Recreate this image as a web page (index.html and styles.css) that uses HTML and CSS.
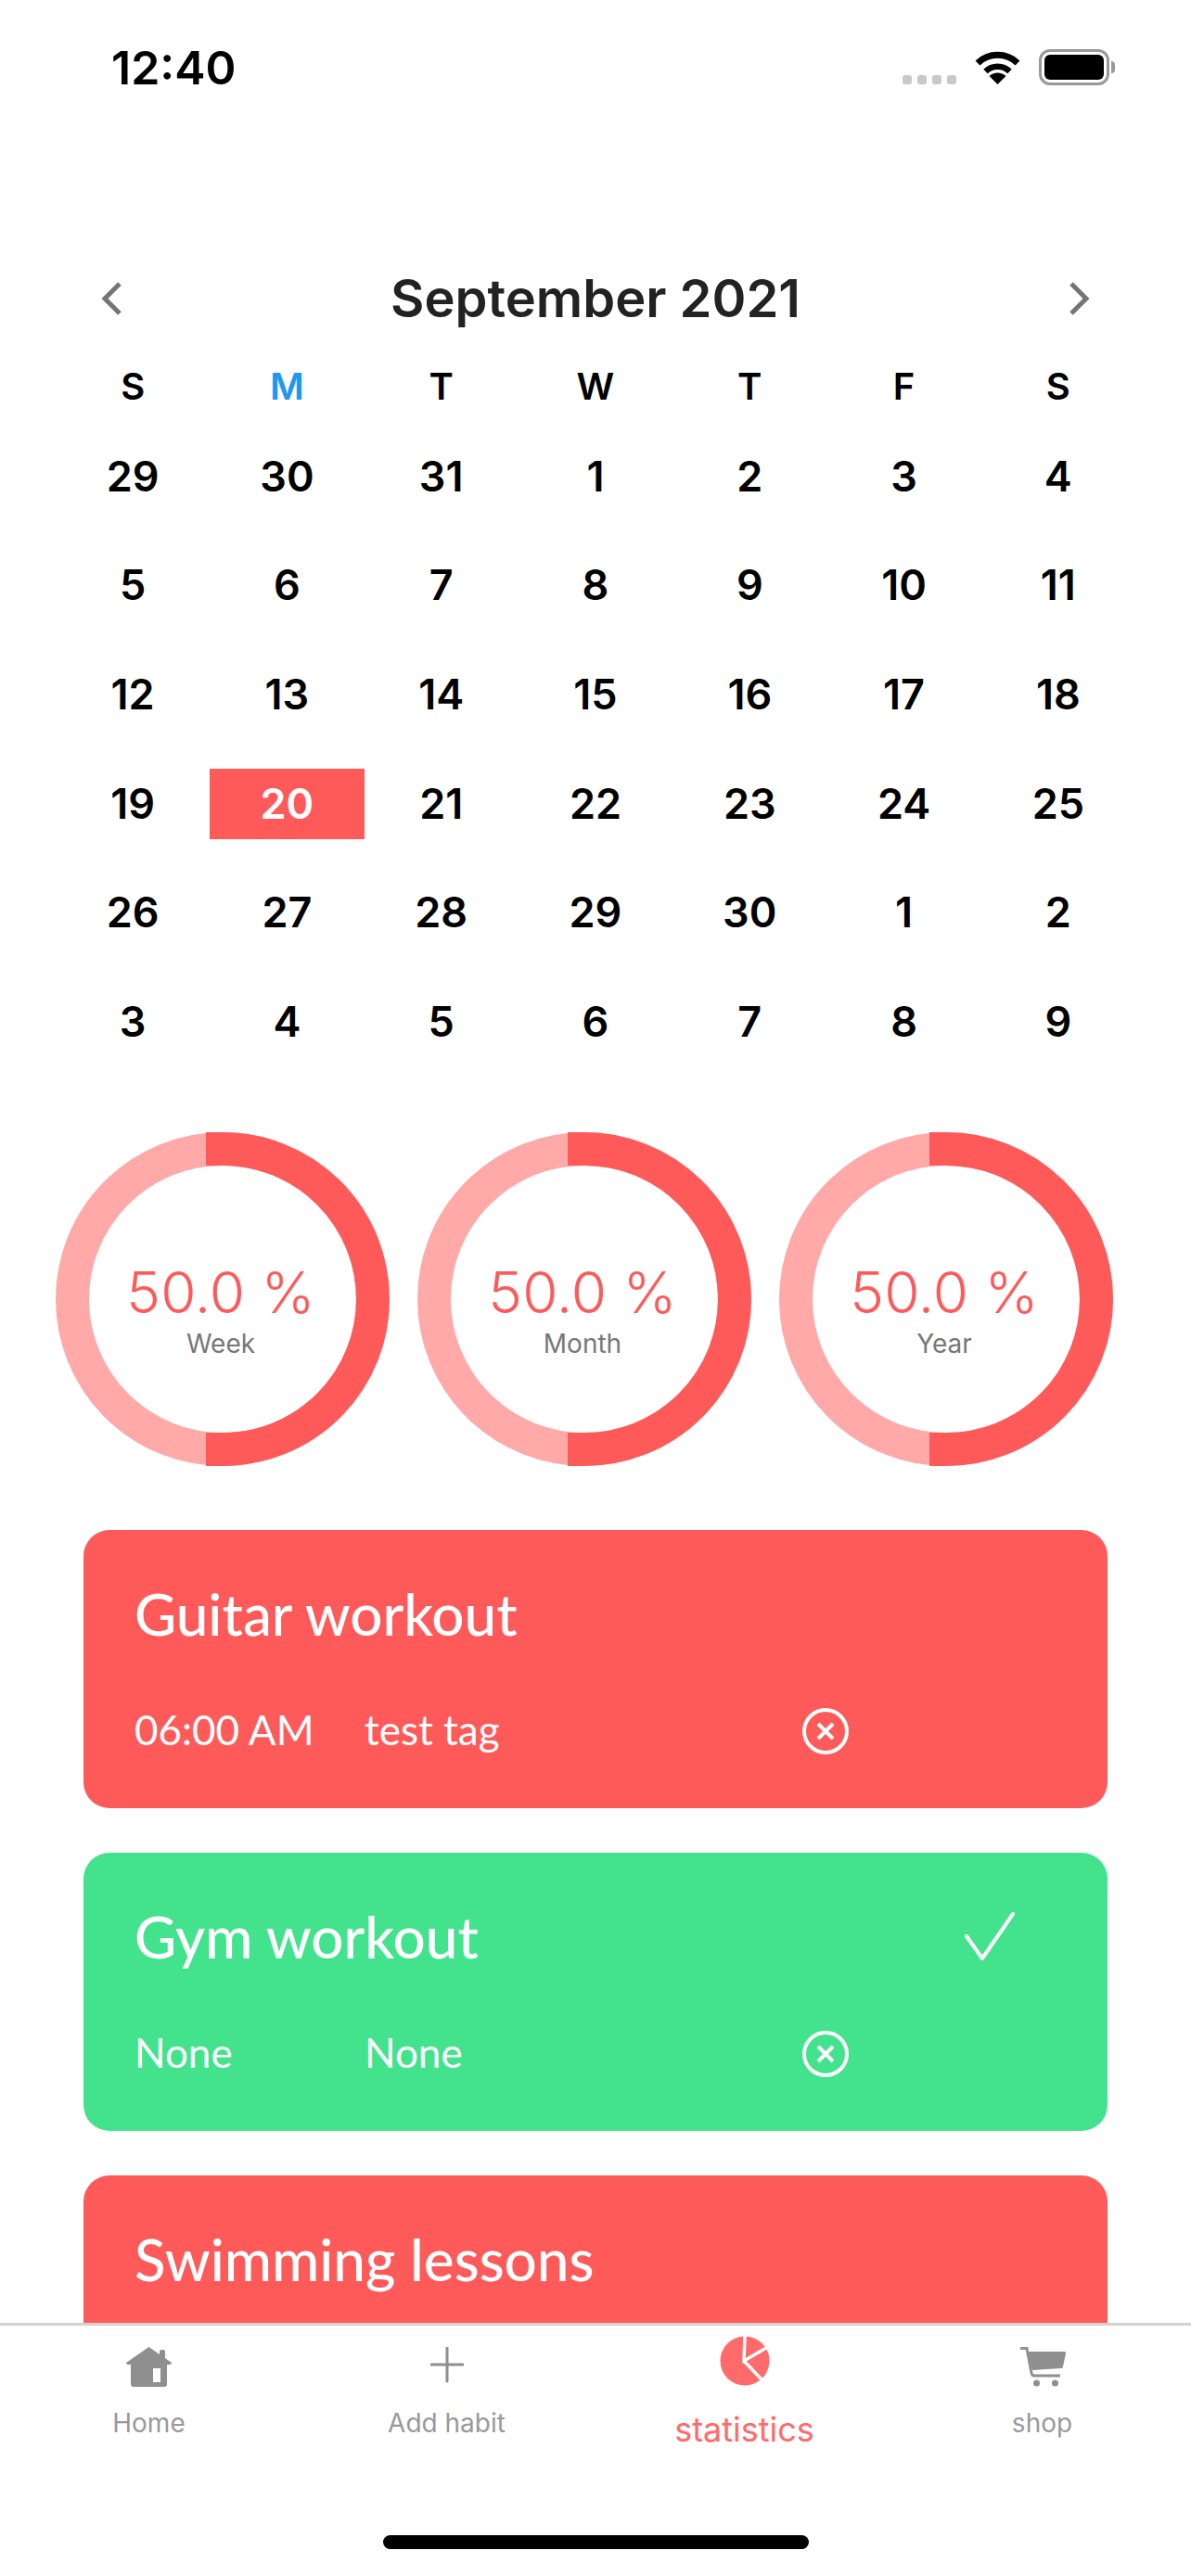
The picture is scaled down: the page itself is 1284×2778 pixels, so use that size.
FILE: index.html
```html
<!DOCTYPE html>
<html lang="en">
  <head>
    <meta charset="UTF-8" />
    <meta name="viewport" content="width=device-width, initial-scale=1.0" />
    <title>Habits</title>
    <link rel="stylesheet" href="styles.css">
  </head>
  <body>
    <div id="phone">
      <div id="statusBar">
        <span id="clock">12:40</span>
        <div id="statusIcons">
          <div id="signal"><i></i><i></i><i></i><i></i></div>
          <svg id="wifi" width="49" height="37" viewBox="0 0 49 37">
            <path d="M3 14 A31 31 0 0 1 46 14" fill="none" stroke="#000" stroke-width="7" />
            <path d="M11.500 23 A19 19 0 0 1 37.500 23" fill="none" stroke="#000" stroke-width="6.500" />
            <path d="M24.500 37 L15.500 28 A13 13 0 0 1 33.500 28 Z" />
          </svg>
          <div id="battery"><div id="batteryFill"></div></div>
          <div id="batteryNub"></div>
        </div>
      </div>

      <div id="content">
        <div id="calendar">
          <div id="calendarHead">
            <svg class="arrow" width="24" height="36" viewBox="0 0 24 36">
              <path d="M21 2 L5 18 L21 34" />
            </svg>
            <span id="monthTitle">September 2021</span>
            <svg class="arrow" width="24" height="36" viewBox="0 0 24 36">
              <path d="M3 2 L19 18 L3 34" />
            </svg>
          </div>
          <div class="weekdays">
            <span>S</span><span class="today">M</span><span>T</span><span>W</span><span>T</span><span>F</span><span>S</span>
          </div>
          <div class="days">
            <span>29</span><span>30</span><span>31</span><span>1</span><span>2</span><span>3</span><span>4</span>
            <span>5</span><span>6</span><span>7</span><span>8</span><span>9</span><span>10</span><span>11</span>
            <span>12</span><span>13</span><span>14</span><span>15</span><span>16</span><span>17</span><span>18</span>
            <span>19</span><span class="selected">20</span><span>21</span><span>22</span><span>23</span><span>24</span><span>25</span>
            <span>26</span><span>27</span><span>28</span><span>29</span><span>30</span><span>1</span><span>2</span>
            <span>3</span><span>4</span><span>5</span><span>6</span><span>7</span><span>8</span><span>9</span>
          </div>
        </div>

        <div id="rings">
          <div class="ring">
            <svg width="360" height="360" viewBox="0 0 360 360">
              <circle class="ringBack" cx="180" cy="180" r="162" />
              <circle class="ringFront" cx="180" cy="180" r="162" pathLength="100" transform="rotate(-90 180 180)" />
            </svg>
            <div class="ringText">
              <span class="ringValue">50.0 %</span>
              <span class="ringLabel">Week</span>
            </div>
          </div>
          <div class="ring">
            <svg width="360" height="360" viewBox="0 0 360 360">
              <circle class="ringBack" cx="180" cy="180" r="162" />
              <circle class="ringFront" cx="180" cy="180" r="162" pathLength="100" transform="rotate(-90 180 180)" />
            </svg>
            <div class="ringText">
              <span class="ringValue">50.0 %</span>
              <span class="ringLabel">Month</span>
            </div>
          </div>
          <div class="ring">
            <svg width="360" height="360" viewBox="0 0 360 360">
              <circle class="ringBack" cx="180" cy="180" r="162" />
              <circle class="ringFront" cx="180" cy="180" r="162" pathLength="100" transform="rotate(-90 180 180)" />
            </svg>
            <div class="ringText">
              <span class="ringValue">50.0 %</span>
              <span class="ringLabel">Year</span>
            </div>
          </div>
        </div>

        <div id="habits">
          <div class="habit red">
            <div class="habitTop">
              <span class="habitName">Guitar workout</span>
            </div>
            <div class="habitRow">
              <span>06:00 AM</span>
              <span>test tag</span>
              <svg class="cancel" width="50" height="50" viewBox="0 0 50 50">
                <circle cx="25" cy="25" r="23" />
                <path d="M17 17 L33 33 M33 17 L17 33" />
              </svg>
            </div>
          </div>
          <div class="habit green">
            <div class="habitTop">
              <span class="habitName">Gym workout</span>
              <svg class="done" width="54" height="52" viewBox="0 0 54 52">
                <path d="M2 26 L19 50 L52 2" />
              </svg>
            </div>
            <div class="habitRow">
              <span>None</span>
              <span>None</span>
              <svg class="cancel" width="50" height="50" viewBox="0 0 50 50">
                <circle cx="25" cy="25" r="23" />
                <path d="M17 17 L33 33 M33 17 L17 33" />
              </svg>
            </div>
          </div>
          <div class="habit red">
            <div class="habitTop">
              <span class="habitName">Swimming lessons</span>
            </div>
          </div>
        </div>
      </div>

      <div id="tabBar">
        <div class="tabs">
          <div class="tab">
            <svg class="tabIcon" width="49" height="43" viewBox="0 0 49 43">
              <path d="M24.500 0 L36 8 L36 5 Q36 3 38 3 L40 3 Q42 3 42 5 L42 12 L49 17 Q49 19 47 19 L44 19 L44 40 Q44 43 41 43 L8 43 Q5 43 5 40 L5 19 L2 19 Q0 19 0 17 Z M29 23 L29 38 L37 38 L37 23 Z" fill-rule="evenodd" />
            </svg>
            <span>Home</span>
          </div>
          <div class="tab">
            <svg class="tabIcon" width="36" height="43" viewBox="0 0 36 43">
              <path class="plus" d="M18 1 L18 37 M0 19 L36 19" />
            </svg>
            <span>Add habit</span>
          </div>
          <div class="tab active">
            <svg class="tabIcon" width="54" height="54" viewBox="0 0 54 54">
              <circle cx="27" cy="27" r="26.500" />
              <path class="pieCut" d="M27 0 L26 27 L50 13 M26 27 L46 48" />
            </svg>
            <span>statistics</span>
          </div>
          <div class="tab">
            <svg class="tabIcon" width="50" height="43" viewBox="0 0 50 43">
              <path d="M9 5 L49 5 Q50 5 50 7 L47 21 Q47 23 45 23 L14 25 Z" />
              <path class="cartLine" d="M1 1.500 L8 1.500 L13 28 Q13.500 31 16 31 L44 31" />
              <circle cx="18.500" cy="39" r="3.500" />
              <circle cx="38.500" cy="39" r="3.500" />
            </svg>
            <span>shop</span>
          </div>
        </div>
        <div id="homeBar"></div>
      </div>
    </div>
  </body>
</html>
```
FILE: styles.css
```css
body {
  margin: 0;
  padding: 0;
  background-color: white;
  font-family: Inter, "Liberation Sans", sans-serif;
}
#phone {
  width: 1284px;
  height: 2778px;
  display: flex;
  flex-direction: column;
  overflow: hidden;
}

/* status bar */
#statusBar {
  height: 120px;
  flex-shrink: 0;
  padding: 0 82px 0 120px;
  box-sizing: border-box;
  display: flex;
  justify-content: space-between;
  align-items: flex-start;
}
#clock {
  margin-top: 44px;
  font-size: 50px;
  line-height: 58px;
  font-weight: 600;
  color: black;
}
#statusIcons {
  margin-top: 53px;
  display: flex;
  align-items: flex-start;
}
#signal {
  margin-top: 28px;
  margin-right: 20px;
  display: flex;
  gap: 6px;
}
#signal i {
  width: 10px;
  height: 10px;
  border-radius: 3px;
  background-color: #c9c9c9;
}
#wifi {
  margin-top: 1px;
  margin-right: 20px;
}
#battery {
  width: 76px;
  height: 39px;
  padding: 3px;
  box-sizing: border-box;
  border: 3px solid #999;
  border-radius: 12px;
}
#batteryFill {
  height: 100%;
  border-radius: 6px;
  background-color: black;
}
#batteryNub {
  width: 4px;
  height: 13px;
  margin-top: 13px;
  margin-left: 2px;
  border-radius: 0 4px 4px 0;
  background-color: #999;
}

#content {
  flex: 1;
  min-height: 0;
  overflow: hidden;
}

/* calendar */
#calendar {
  padding: 160px 60px 0;
}
#calendarHead {
  height: 82px;
  padding: 2px 48px 0;
  box-sizing: border-box;
  display: flex;
  justify-content: space-between;
  align-items: center;
}
#monthTitle {
  font-size: 56px;
  font-weight: 600;
  color: #222;
}
.arrow path {
  fill: none;
  stroke: #757575;
  stroke-width: 5;
}
.weekdays,
.days {
  display: grid;
  grid-template-columns: repeat(7, 1fr);
  justify-items: stretch;
  text-align: center;
  color: black;
  font-weight: 600;
}
.weekdays {
  height: 60px;
  margin-top: 25px;
  margin-bottom: 8px;
  font-size: 40px;
  line-height: 60px;
}
.today {
  color: #2196f3;
}
.days {
  grid-auto-rows: 117.6px;
  align-items: center;
  font-size: 45px;
}
.days span {
  height: 76px;
  line-height: 76px;
}
.selected {
  background-color: #ff5a5a;
  color: white;
}

/* progress rings */
#rings {
  margin-top: 60px;
  padding-left: 60px;
  display: flex;
  gap: 30px;
}
.ring {
  width: 360px;
  height: 360px;
  display: grid;
}
.ring svg,
.ringText {
  grid-area: 1 / 1;
}
.ringBack,
.ringFront {
  fill: none;
  stroke-width: 36;
}
.ringBack {
  stroke: #ffa9a9;
}
.ringFront {
  stroke: #ff5a5a;
  stroke-dasharray: 50 50;
  stroke-linecap: square;
}
.ringText {
  padding: 24px 4px 0 0;
  display: flex;
  flex-direction: column;
  align-items: center;
  justify-content: center;
}
.ringValue {
  font-size: 62px;
  line-height: 70px;
  font-weight: 300;
  color: #ff5a5a;
}
.ringLabel {
  margin-top: 2px;
  font-size: 28px;
  line-height: 36px;
  color: #777;
}

/* habit cards */
#habits {
  margin-top: 69px;
  padding: 0 90px;
  display: flex;
  flex-direction: column;
  gap: 48px;
}
.habit {
  height: 300px;
  flex-shrink: 0;
  padding: 50px 100px 0 55px;
  box-sizing: border-box;
  border-radius: 28px;
  color: white;
  font-family: Lato, sans-serif;
}
.red {
  background-color: #ff5a5a;
}
.green {
  background-color: #43e38d;
}
.habitTop {
  height: 80px;
  display: flex;
  justify-content: space-between;
  align-items: center;
}
.habitName {
  font-size: 62px;
  font-weight: 500;
}
.habitRow {
  height: 80px;
  margin-top: 45px;
  display: grid;
  grid-template-columns: 248px 472px 50px;
  align-items: center;
  font-size: 44px;
}
.cancel {
  margin-top: 4px;
}
.cancel circle,
.cancel path {
  fill: none;
  stroke: white;
  stroke-width: 4;
}
.done path {
  fill: none;
  stroke: white;
  stroke-width: 4;
  stroke-linecap: round;
  stroke-linejoin: round;
}

/* bottom tabs */
#tabBar {
  height: 273px;
  flex-shrink: 0;
  box-sizing: border-box;
  border-top: 3px solid #d2d2d2;
  display: flex;
  flex-direction: column;
}
.tabs {
  height: 224px;
  display: grid;
  grid-template-columns: repeat(4, 1fr);
}
.tab {
  padding-top: 23px;
  display: flex;
  flex-direction: column;
  align-items: center;
  font-size: 28px;
  line-height: 34px;
  color: #999;
}
.tab span {
  margin-top: 22px;
}
.tabIcon {
  fill: #8f8f8f;
}
.plus {
  fill: none;
  stroke: #8f8f8f;
  stroke-width: 3;
  stroke-linecap: round;
}
.pieCut {
  fill: none;
  stroke: white;
  stroke-width: 3.500;
}
.cartLine {
  fill: none;
  stroke: #8f8f8f;
  stroke-width: 3;
}
.active {
  padding-top: 11px;
  font-size: 36px;
  color: #ff6b6b;
}
.active .tabIcon {
  fill: #ff6b6b;
}
.active span {
  margin-top: 30px;
}
#homeBar {
  width: 459px;
  height: 15px;
  margin: 2px auto 0;
  border-radius: 8px;
  background-color: black;
}
```
